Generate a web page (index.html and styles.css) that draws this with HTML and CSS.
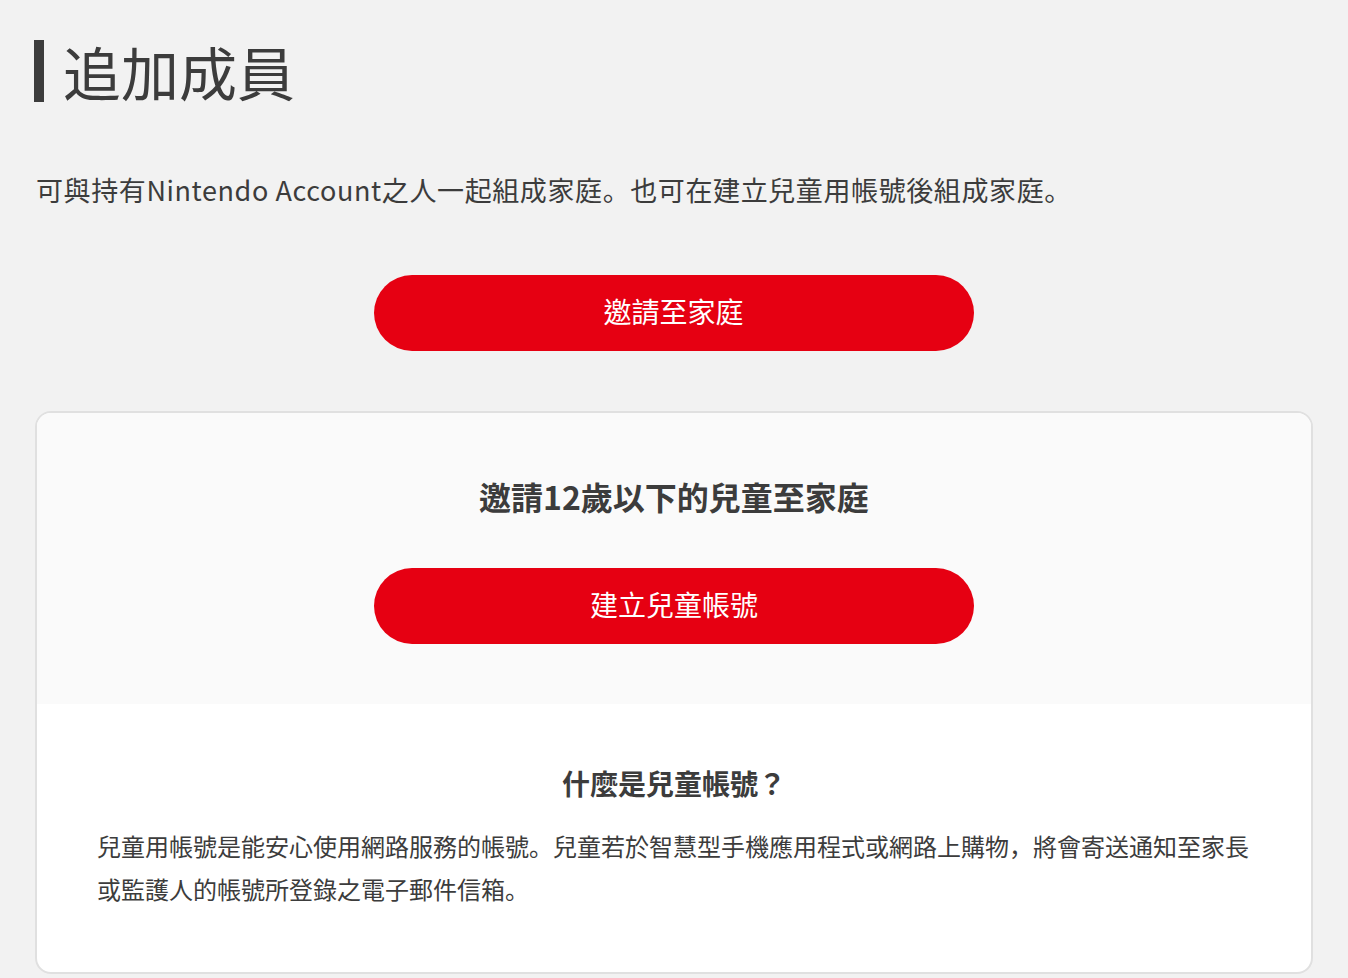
FILE: index.html
```html
<!DOCTYPE html>
<html lang="zh-Hant">
  <head>
    <meta charset="UTF-8" />
    <meta name="viewport" content="width=device-width, initial-scale=1.0" />
    <link rel="stylesheet" href="styles.css">
    <title>追加成員</title>
  </head>
  <body>
    <div class="page">
      <h1 class="page-title">追加成員</h1>

      <p class="lead">可與持有Nintendo Account之人一起組成家庭。也可在建立兒童用帳號後組成家庭。</p>

      <div class="actions">
        <button class="btn-red">邀請至家庭</button>
      </div>

      <div class="card">
        <div class="card-top">
          <h2 class="card-title">邀請12歲以下的兒童至家庭</h2>
          <div class="actions">
            <button class="btn-red">建立兒童帳號</button>
          </div>
        </div>
        <div class="card-bottom">
          <h3 class="info-title">什麼是兒童帳號？</h3>
          <p class="info-text">兒童用帳號是能安心使用網路服務的帳號。兒童若於智慧型手機應用程式或網路上購物，將會寄送通知至家長或監護人的帳號所登錄之電子郵件信箱。</p>
        </div>
      </div>
    </div>
  </body>
</html>
```

FILE: styles.css
```css
body {
  margin: 0;
  background-color: #f2f2f2;
  color: #3c3c3c;
  font-family: "Noto Sans CJK JP", "Noto Sans CJK TC", "Noto Sans", sans-serif;
  font-feature-settings: "locl" 0;
}

.page {
  padding: 40px 35px 0 34px;
}

.page-title {
  margin: 0;
  border-left: 10px solid #3c3c3c;
  padding-left: 19px;
  font-size: 58px;
  font-weight: 400;
  line-height: 62px;
}

.lead {
  margin: 68px 0 0 2px;
  font-size: 27px;
  letter-spacing: 0.6px;
  line-height: 40px;
}

.actions {
  display: flex;
  justify-content: center;
}

.page > .actions {
  margin-top: 65px;
}

.btn-red {
  width: 600px;
  height: 76px;
  border: none;
  border-radius: 38px;
  padding: 0 0 5px;
  background-color: #e60012;
  color: #fff;
  font-family: inherit;
  font-size: 28px;
  cursor: pointer;
}

.card {
  margin: 60px 0 0 1px;
  border: 2px solid #e0e0e0;
  border-radius: 16px;
  overflow: hidden;
  background-color: #fff;
}

.card-top {
  background-color: #fafafa;
  padding: 61px 0 60px;
}

.card-title {
  margin: 0 0 50px;
  text-align: center;
  font-size: 32px;
  line-height: 44px;
  font-weight: 700;
}

.card-bottom {
  padding: 59px 60px 62px;
}

.info-title {
  margin: 0;
  text-align: center;
  font-size: 28px;
  line-height: 40px;
  font-weight: 700;
}

.info-text {
  margin: 21px 0 0;
  font-size: 24px;
  line-height: 43px;
}
```
